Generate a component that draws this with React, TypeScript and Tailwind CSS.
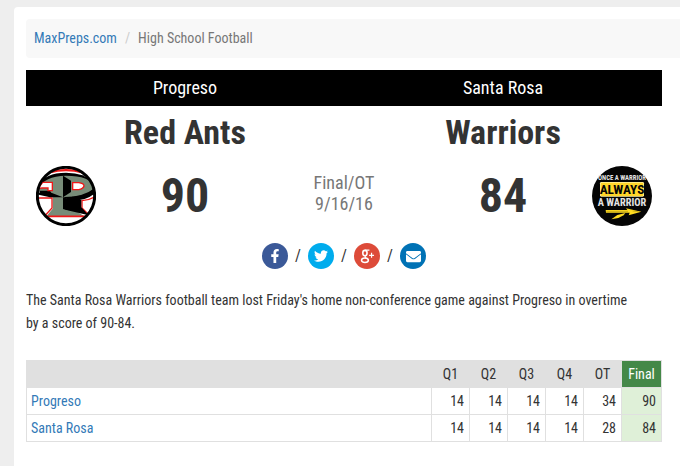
import { Fragment } from 'react'
import { FaEnvelope, FaFacebookF, FaTwitter } from 'react-icons/fa'

const periods = ['Q1', 'Q2', 'Q3', 'Q4', 'OT']

const teams = [
  { school: 'Progreso', mascot: 'Red Ants', scores: [14, 14, 14, 14, 34], final: 90 },
  { school: 'Santa Rosa', mascot: 'Warriors', scores: [14, 14, 14, 14, 28], final: 84 },
]

function GooglePlusIcon() {
  return (
    <svg viewBox="0 0 14 14" className="size-[15px]" fill="none" stroke="currentColor">
      <ellipse cx="4.6" cy="3.8" rx="2" ry="2.5" strokeWidth="1.5" />
      <path d="M4.4 1.1h4.4M5.4 6.3c-1.2 1-.6 1.6.4 2.2" strokeWidth="1.1" />
      <ellipse cx="4.6" cy="10.5" rx="3.2" ry="2.1" strokeWidth="1.4" />
      <path d="M10.8 3.6v4.6M8.5 5.9h4.6" strokeWidth="1.1" />
    </svg>
  )
}

const shares = [
  { label: 'Share on Facebook', color: 'bg-[#3b5998]', icon: <FaFacebookF size={14} /> },
  { label: 'Share on Twitter', color: 'bg-[#00aced]', icon: <FaTwitter size={14} /> },
  { label: 'Share on Google+', color: 'bg-[#dd4b39]', icon: <GooglePlusIcon /> },
  { label: 'Share by email', color: 'bg-[#0072b5]', icon: <FaEnvelope size={15} /> },
]

function RedAntsLogo() {
  return (
    <svg viewBox="18 18 180 180" className="size-[60px]" role="img" aria-label="Red Ants logo">
      <defs>
        <clipPath id="ants-disc">
          <circle cx="108" cy="108" r="84" />
        </clipPath>
      </defs>
      <circle cx="108" cy="108" r="88" fill="#fff" />
      <g clipPath="url(#ants-disc)">
        <path d="M58 37Q108 24 158 37" fill="none" stroke="#f01818" strokeWidth="7" />
        <path d="M24 76Q45 38 108 38Q172 38 198 76V100L126 124L30 102Z" fill="#000" />
        {/* letter body */}
        <path
          d="M26 86Q42 48 108 47Q180 47 192 80Q186 104 126 110V146L166 170H48L68 146V108L60 92H26Z"
          fill="#788c78"
        />
        <path d="M24 86L38 67H67V92H54V84H36Z" fill="#fff" stroke="#f01818" strokeWidth="4" />
        <path d="M128 68H146Q162 70 162 78Q160 86 146 89H128Z" fill="#fff" stroke="#f01818" strokeWidth="4" />
        {/* lower left and right cut-outs */}
        <path d="M22 114H66V144L44 168H22Z" fill="#fff" stroke="#f01818" strokeWidth="4" />
        <path d="M198 108Q180 121 156 122V144L180 168H198Z" fill="#fff" stroke="#f01818" strokeWidth="4" />
        {/* facets */}
        <path d="M99 47L123 62V96L99 112Z" fill="#000" />
        <path d="M99 112L60 112L26 104V98L58 96Z" fill="#000" />
        <path d="M99 111Q162 112 194 84V100Q168 123 122 122Z" fill="#000" />
        <path d="M99 112L126 120H154V142L176 166L99 148Z" fill="#000" />
        <path d="M99 148L152 166V172H99Z" fill="#788c78" />
        <path d="M28 170H188V198H28Z" fill="#fff" />
        <path d="M42 169H178" stroke="#f01818" strokeWidth="5" />
      </g>
      <circle cx="108" cy="108" r="86" fill="none" stroke="#000" strokeWidth="9" />
    </svg>
  )
}

function WarriorsLogo() {
  return (
    <svg
      viewBox="18 18 180 180"
      className="size-[60px] font-['Roboto_Condensed',Roboto,sans-serif] font-bold"
      role="img"
      aria-label="Warriors logo"
    >
      <circle cx="108" cy="108" r="90" fill="#050505" />
      <g textAnchor="middle">
        <text x="108" y="60" fontSize="20" fill="#e4e4e4">ONCE A WARRIOR</text>
        <rect x="42" y="66" width="132" height="44" rx="4" fill="#fff0a0" />
        <rect x="44" y="68" width="128" height="40" rx="3" fill="#ffd52a" />
        <text x="108" y="102" fontSize="40" fill="#050505">ALWAYS</text>
        <text x="108" y="138" fontSize="31" fill="#e4e4e4">A WARRIOR</text>
      </g>
      <path d="M59 150H124L120 145L166 155L128 166L131 158H60Z" fill="#ffdc22" />
      <path d="M61 154H126M140 153L157 155" stroke="#6b5600" strokeWidth="1" />
      <path d="M118 159L94 165L76 178L97 174L113 166Z" fill="#ffdc22" />
    </svg>
  )
}

export default function App() {
  const [away, home] = teams

  return (
    <div className="min-h-screen overflow-x-hidden bg-[#eee] pt-[7px] pl-3.5 font-['Roboto_Condensed',Roboto,sans-serif] text-sm text-[#333]">
      <main className="min-h-screen rounded-tl-sm bg-white pt-3 pl-3">
        <nav aria-label="Breadcrumb" className="rounded-l bg-[#f8f8f8] px-2 py-2">
          <ol className="flex leading-[23px]">
            <li>
              <a href="#" className="text-[#337ab7]">MaxPreps.com</a>
            </li>
            <li className="px-2 text-[#ccc]" aria-hidden="true">/</li>
            <li className="text-[#777]">High School Football</li>
          </ol>
        </nav>

        <div className="mr-[18px]">
          <header className="mt-3 grid grid-cols-2 text-center">
            {teams.map((team) => (
              <div key={team.school}>
                <p className="bg-black text-lg leading-9 text-white">{team.school}</p>
                <h2 className="pt-1 text-[34px] leading-[44px] font-bold">{team.mascot}</h2>
              </div>
            ))}
          </header>

          {/* Score line */}
          <section className="mt-3 grid grid-cols-[1fr_2fr_2fr_2fr_1fr] items-center justify-items-center">
            <RedAntsLogo />
            <span className="text-5xl leading-none font-bold">{away.final}</span>
            <div className="self-start pt-1.5 text-center text-lg leading-[21px] text-[#777]">
              <p>Final/OT</p>
              <p>9/16/16</p>
            </div>
            <span className="text-5xl leading-none font-bold">{home.final}</span>
            <WarriorsLogo />
          </section>

          <div className="mt-[17px] flex items-center justify-center">
            {shares.map((share, i) => (
              <Fragment key={share.label}>
                {i > 0 && <span className="w-5 text-center text-base">/</span>}
                <a
                  href="#"
                  aria-label={share.label}
                  className={`flex size-[26px] items-center justify-center rounded-full text-white ${share.color}`}
                >
                  {share.icon}
                </a>
              </Fragment>
            ))}
          </div>

          <p className="mt-5 pr-6 leading-[23px]">
            The Santa Rosa Warriors football team lost Friday's home non-conference game against Progreso in overtime
            by a score of 90-84.
          </p>

          <table className="mt-[25px] w-full table-fixed border-collapse text-right">
            <colgroup>
              <col />
              {periods.map((period) => (
                <col key={period} className="w-[38px]" />
              ))}
              <col className="w-10" />
            </colgroup>
            <thead>
              <tr className="h-[27px] bg-[#e0e0e0] text-center">
                <td className="border border-[#e0e0e0]" />
                {periods.map((period) => (
                  <th key={period} scope="col" className="border border-[#e0e0e0] font-normal">{period}</th>
                ))}
                <th scope="col" className="border border-[#e0e0e0] bg-[#448848] font-normal text-white">Final</th>
              </tr>
            </thead>
            <tbody>
              {teams.map((team) => (
                <tr key={team.school} className="h-[27px]">
                  <th scope="row" className="border border-[#e0e0e0] px-1 text-left font-normal">
                    <a href="#" className="text-[#337ab7]">{team.school}</a>
                  </th>
                  {team.scores.map((score, i) => (
                    <td key={periods[i]} className="border border-[#e0e0e0] px-[5px]">{score}</td>
                  ))}
                  <td className="border border-[#e0e0e0] bg-[#dff0d8] px-[5px]">{team.final}</td>
                </tr>
              ))}
            </tbody>
          </table>
        </div>
      </main>
    </div>
  )
}
